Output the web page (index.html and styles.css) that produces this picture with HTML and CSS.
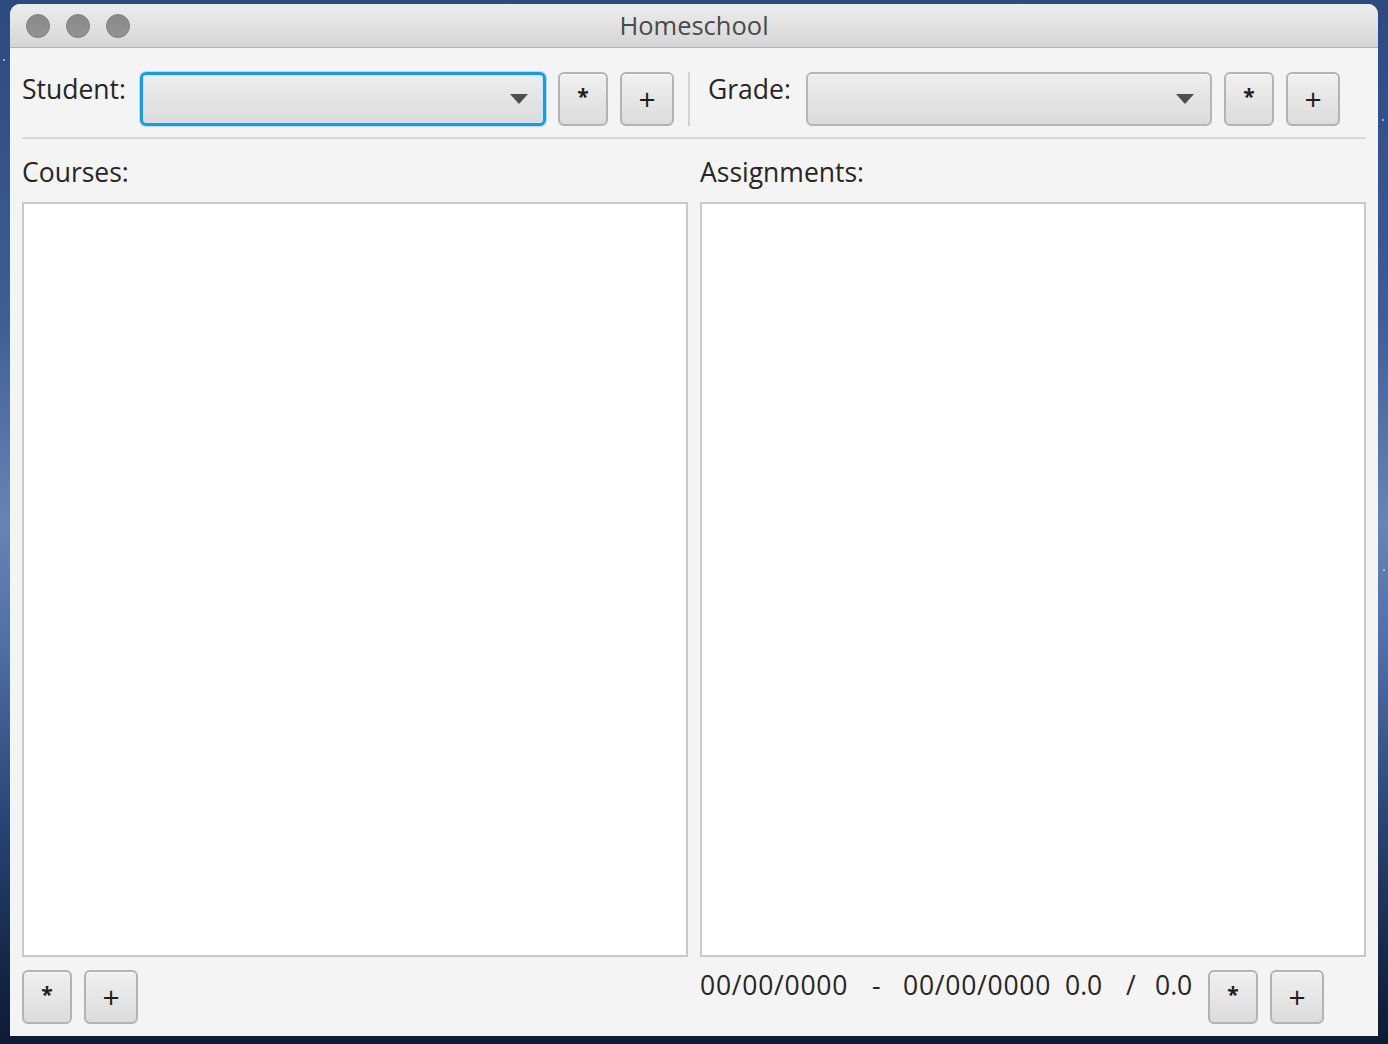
FILE: index.html
```html
<!DOCTYPE html>
<html lang="en">
<head>
<meta charset="utf-8">
<title>Homeschool</title>
<link rel="stylesheet" href="styles.css">
</head>
<body>
<div class="desktop">
  <div class="window">
    <div class="titlebar">
      <div class="lights">
        <span class="light"></span>
        <span class="light"></span>
        <span class="light"></span>
      </div>
      <div class="title">Homeschool</div>
      <div class="titlebar-spacer"></div>
    </div>
    <div class="content">
      <div class="toolbar">
        <span class="field-label student-label">Student:</span>
        <div class="combo focused"><span class="arrow"></span></div>
        <button class="btn btn-star">*</button>
        <button class="btn btn-plus">+</button>
        <div class="vsep"></div>
        <span class="field-label grade-label">Grade:</span>
        <div class="combo"><span class="arrow"></span></div>
        <button class="btn btn-star">*</button>
        <button class="btn btn-plus">+</button>
      </div>
      <div class="hsep"></div>
      <div class="panes">
        <section class="pane">
          <div class="pane-title">Courses:</div>
          <div class="listview"></div>
          <div class="pane-actions">
            <button class="btn btn-star">*</button>
            <button class="btn btn-plus">+</button>
          </div>
        </section>
        <section class="pane">
          <div class="pane-title">Assignments:</div>
          <div class="listview"></div>
          <div class="pane-actions">
            <span class="summary date-start">00/00/0000</span>
            <span class="summary dash">-</span>
            <span class="summary date-end">00/00/0000</span>
            <span class="summary score">0.0</span>
            <span class="summary slash">/</span>
            <span class="summary total">0.0</span>
            <button class="btn btn-star">*</button>
            <button class="btn btn-plus">+</button>
          </div>
        </section>
      </div>
    </div>
  </div>
</div>
</body>
</html>
```
FILE: styles.css
```css
* {
  box-sizing: border-box;
}

html, body {
  margin: 0;
  padding: 0;
}

body {
  width: 1388px;
  height: 1044px;
  overflow: hidden;
  font-family: "Open Sans", "Liberation Sans", sans-serif;
}

.desktop {
  width: 1388px;
  height: 1044px;
  padding: 4px 10px 0 10px;
  background:
    radial-gradient(circle at 4px 60px, rgba(255,255,255,0.5) 0 1px, transparent 1.5px),
    radial-gradient(circle at 1383px 120px, rgba(255,255,255,0.5) 0 1px, transparent 1.5px),
    radial-gradient(circle at 1384px 570px, rgba(255,255,255,0.45) 0 1px, transparent 1.5px),
    linear-gradient(180deg, #2d4a7f 0%, #3d5d93 30%, #6784b6 50%, #4f6fa5 62%, #2a4677 78%, #142849 92%, #0d1b35 100%);
}

.window {
  width: 1368px;
  height: 1032px;
  border-radius: 10px 10px 0 0;
  overflow: hidden;
  display: flex;
  flex-direction: column;
  background: #f4f4f4;
}

/* ---------- title bar ---------- */
.titlebar {
  height: 44px;
  flex: none;
  display: grid;
  grid-template-columns: 1fr auto 1fr;
  align-items: start;
  background: linear-gradient(180deg, #ececec 0%, #e2e2e2 50%, #d5d5d5 100%);
  border-bottom: 1px solid #b2b2b2;
}

.lights {
  display: flex;
  gap: 16px;
  padding: 10px 0 0 16px;
}

.light {
  width: 24px;
  height: 24px;
  border-radius: 50%;
  background: linear-gradient(180deg, #8a8a8a, #939393);
  border: 1px solid #7b7b7b;
}

.title {
  font-size: 25.5px;
  line-height: 43px;
  color: #4a4a4a;
}

/* ---------- content ---------- */
.content {
  flex: 1;
  display: flex;
  flex-direction: column;
  padding: 24px 12px 12px 12px;
  color: #262626;
  font-size: 26.5px;
}

.toolbar {
  display: flex;
  align-items: flex-start;
  height: 54px;
  flex: none;
}

.field-label {
  line-height: 34px;
  font-size: 26.5px;
  color: #262626;
}

.student-label {
  width: 118px;
}

.grade-label {
  width: 98px;
  margin-left: 18px;
}

.combo {
  width: 406px;
  height: 54px;
  border: 2px solid #b6b6b6;
  border-radius: 6px;
  background: linear-gradient(180deg, #eeeeee 0%, #e4e4e4 50%, #dbdbdb 100%);
  box-shadow: inset 0 1px 0 #f8f8f8;
  display: flex;
  align-items: center;
  justify-content: flex-end;
  padding-right: 16px;
}

.combo.focused {
  border: 3px solid #1a9be0;
  box-shadow: 0 0 0 1px #b4dcf1, inset 0 0 0 1px #cfe6f2;
  padding-right: 15px;
}

.arrow {
  width: 0;
  height: 0;
  border-left: 9px solid transparent;
  border-right: 9px solid transparent;
  border-top: 10px solid #4e4e4e;
}

.btn {
  height: 54px;
  padding: 0;
  border: 2px solid #b3b3b3;
  border-radius: 6px;
  background: linear-gradient(180deg, #f0f0f0 0%, #e6e6e6 50%, #dcdcdc 100%);
  box-shadow: inset 0 1px 0 #fafafa;
  font-family: "Open Sans", "Liberation Sans", sans-serif;
  color: #1e1e1e;
  text-align: center;
  margin-left: 12px;
  flex: none;
}

.btn-star {
  width: 50px;
  font-size: 21px;
  font-weight: 700;
  line-height: 44px;
  padding-bottom: 6px;
}

.btn-plus {
  width: 54px;
  font-size: 30px;
  line-height: 50px;
}

.vsep {
  width: 2px;
  height: 54px;
  margin-left: 14px;
  background: #d2d2d2;
}

.hsep {
  height: 2px;
  flex: none;
  margin-top: 11px;
  background: #d8d8d8;
}

.panes {
  flex: 1;
  display: grid;
  grid-template-columns: 666px 666px;
  column-gap: 12px;
  margin-top: 16px;
  min-height: 0;
}

.pane {
  display: flex;
  flex-direction: column;
  min-height: 0;
}

.pane-title {
  line-height: 34px;
  height: 34px;
  color: #262626;
}

.listview {
  flex: 1;
  margin-top: 13px;
  background: #ffffff;
  border: 2px solid #c9c9c9;
}

.pane-actions {
  flex: none;
  height: 54px;
  margin-top: 13px;
  display: flex;
  align-items: flex-start;
}

.pane-actions .btn:first-child {
  margin-left: 0;
}

.summary {
  line-height: 34px;
  margin-top: -2px;
  white-space: nowrap;
  color: #262626;
}

.date-start {
  width: 170px;
  letter-spacing: 0.75px;
}

.dash {
  width: 33px;
  padding-left: 2px;
}

.date-end {
  width: 162px;
  letter-spacing: 0.75px;
}

.score {
  width: 61px;
}

.slash {
  width: 29px;
}

.total {
  width: 53px;
}

.pane-actions .summary + .btn {
  margin-left: 0;
}
```
